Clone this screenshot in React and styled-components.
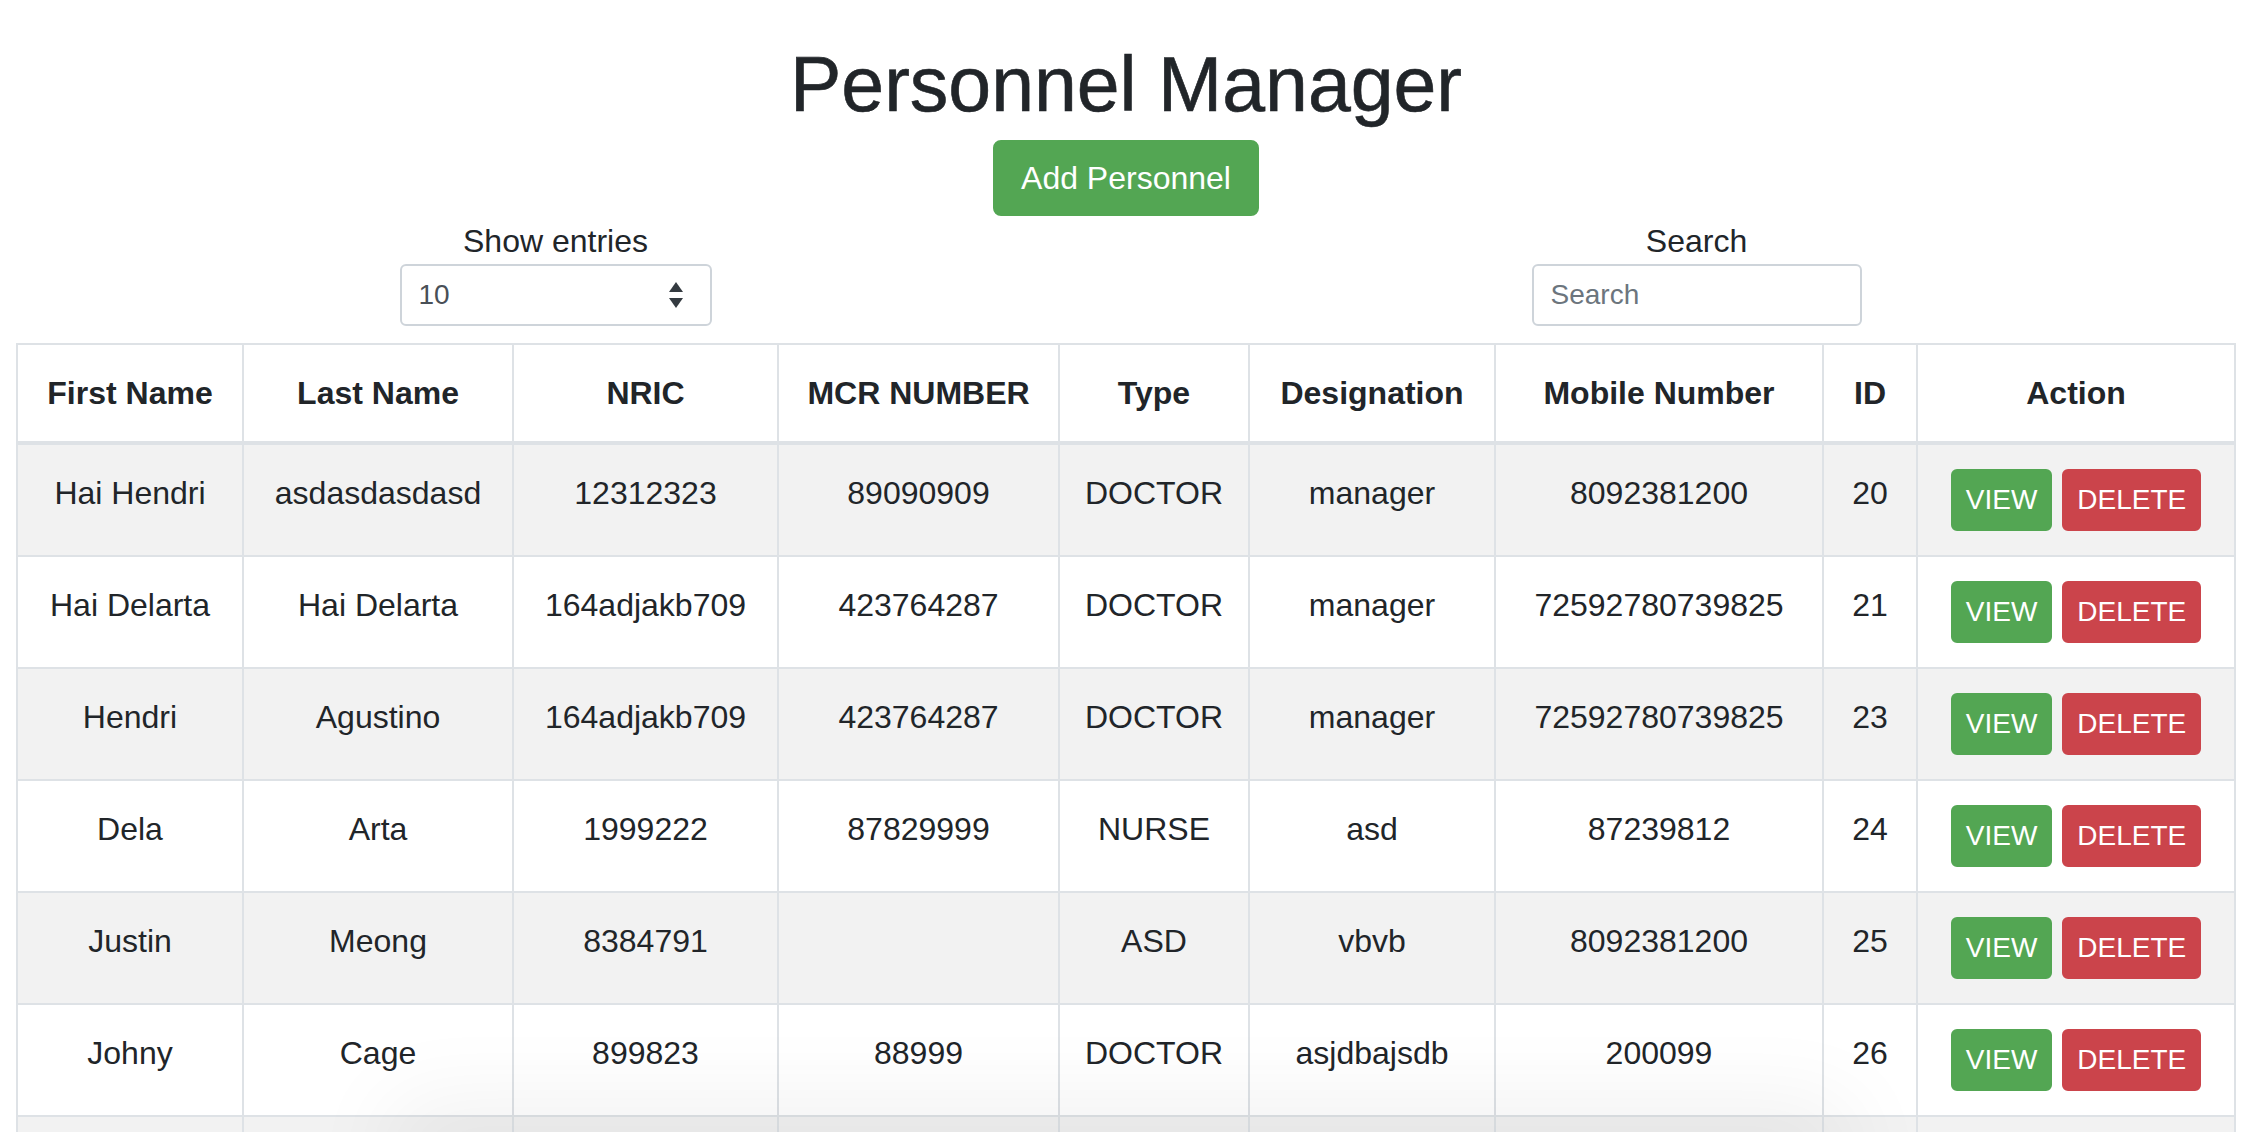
import React from "react";
import styled, { createGlobalStyle } from "styled-components";

const rows = [
  { first: "Hai Hendri", last: "asdasdasdasd", nric: "12312323", mcr: "89090909", type: "DOCTOR", designation: "manager", mobile: "8092381200", id: 20 },
  { first: "Hai Delarta", last: "Hai Delarta", nric: "164adjakb709", mcr: "423764287", type: "DOCTOR", designation: "manager", mobile: "72592780739825", id: 21 },
  { first: "Hendri", last: "Agustino", nric: "164adjakb709", mcr: "423764287", type: "DOCTOR", designation: "manager", mobile: "72592780739825", id: 23 },
  { first: "Dela", last: "Arta", nric: "1999222", mcr: "87829999", type: "NURSE", designation: "asd", mobile: "87239812", id: 24 },
  { first: "Justin", last: "Meong", nric: "8384791", mcr: "", type: "ASD", designation: "vbvb", mobile: "8092381200", id: 25 },
  { first: "Johny", last: "Cage", nric: "899823", mcr: "88999", type: "DOCTOR", designation: "asjdbajsdb", mobile: "200099", id: 26 },
];

const columns = [
  { label: "First Name", width: 226 },
  { label: "Last Name", width: 270 },
  { label: "NRIC", width: 265 },
  { label: "MCR NUMBER", width: 281 },
  { label: "Type", width: 190 },
  { label: "Designation", width: 246 },
  { label: "Mobile Number", width: 328 },
  { label: "ID", width: 94 },
  { label: "Action", width: 318 },
];

const App = () => {
  return (
    <>
      <GlobalStyle />
      <Page>
        <Title>Personnel Manager</Title>
        <AddButton>Add Personnel</AddButton>

        <Controls>
          <Field>
            <Label>Show entries</Label>
            <SelectBox>
              <span>10</span>
              <svg width="16" height="28" viewBox="0 0 16 28">
                <path d="M8 1 L15 11 L1 11 Z" fill="#343a40" />
                <path d="M8 27 L15 17 L1 17 Z" fill="#343a40" />
              </svg>
            </SelectBox>
          </Field>
          <Field>
            <Label>Search</Label>
            <SearchInput placeholder="Search" />
          </Field>
        </Controls>

        <Table>
          <colgroup>
            {columns.map((c) => (
              <col key={c.label} style={{ width: c.width }} />
            ))}
          </colgroup>
          <thead>
            <tr>
              {columns.map((c) => (
                <Th key={c.label}>{c.label}</Th>
              ))}
            </tr>
          </thead>
          <tbody>
            {rows.map((r, i) => (
              <Row key={r.id} $striped={i % 2 === 0}>
                <Td>{r.first}</Td>
                <Td>{r.last}</Td>
                <Td>{r.nric}</Td>
                <Td>{r.mcr}</Td>
                <Td>{r.type}</Td>
                <Td>{r.designation}</Td>
                <Td>{r.mobile}</Td>
                <Td>{r.id}</Td>
                <Td>
                  <SmallBtn $variant="success">VIEW</SmallBtn>
                  <SmallBtn $variant="danger">DELETE</SmallBtn>
                </Td>
              </Row>
            ))}
            {/* next row starts just at the fold */}
            <Row $striped>
              {columns.map((c) => (
                <EmptyTd key={c.label} />
              ))}
            </Row>
          </tbody>
        </Table>
      </Page>
      <BottomShade />
    </>
  );
};

export default App;

// ===== styles =====
const GlobalStyle = createGlobalStyle`
  html, body {
    margin: 0;
    padding: 0;
    overflow: hidden;
    background: #fff;
  }
  body {
    font-family: "Liberation Sans", Arial, sans-serif;
    color: #212529;
  }
`;

const Page = styled.div`
  width: 2252px;
  display: flex;
  flex-direction: column;
  align-items: center;
  text-align: center;
`;

const Title = styled.h1`
  margin: 0;
  padding-top: 38px;
  font-size: 77px;
  font-weight: 400;
  line-height: 92px;
  color: #212529;
  -webkit-text-stroke: 0.6px #212529;
`;

const AddButton = styled.button`
  margin-top: 10px;
  height: 76px;
  padding: 0 26px;
  font-family: inherit;
  font-size: 32px;
  color: #fff;
  background: #53a653;
  border: 2px solid #53a653;
  border-radius: 8px;
  cursor: pointer;
`;

const Controls = styled.div`
  display: grid;
  grid-template-columns: 330px 330px;
  column-gap: 811px;
  margin-top: 2px;
`;

const Field = styled.div`
  display: flex;
  flex-direction: column;
  align-items: center;
`;

const Label = styled.div`
  font-size: 32px;
  line-height: 46px;
`;

const SelectBox = styled.div`
  box-sizing: border-box;
  width: 312px;
  height: 62px;
  display: flex;
  align-items: center;
  justify-content: space-between;
  padding: 0 26px 0 17px;
  border: 2px solid #ced4da;
  border-radius: 6px;
  font-size: 28px;
  color: #495057;
  background: #fff;
`;

const SearchInput = styled.input`
  box-sizing: border-box;
  width: 330px;
  height: 62px;
  padding: 0 17px;
  border: 2px solid #ced4da;
  border-radius: 6px;
  font-family: inherit;
  font-size: 28px;
  color: #495057;
  outline: none;
  &::placeholder { color: #6c757d; }
`;

const Table = styled.table`
  margin-top: 17px;
  width: 2218px;
  table-layout: fixed;
  border-collapse: collapse;
  font-size: 32px;
  line-height: 48px;
`;

const Th = styled.th`
  padding: 24px;
  border: 2px solid #dee2e6;
  border-bottom-width: 4px;
  font-weight: 700;
  white-space: nowrap;
  vertical-align: bottom;
`;

const Row = styled.tr`
  background: ${(p) => (p.$striped ? "#f2f2f2" : "#fff")};
`;

const Td = styled.td`
  padding: 24px 0;
  border: 2px solid #dee2e6;
  vertical-align: top;
  white-space: nowrap;
`;

const EmptyTd = styled(Td)`
  height: 62px;
`;

const SmallBtn = styled.button`
  height: 62px;
  padding: 0 13px;
  margin: 0 5px;
  font-family: inherit;
  font-size: 28px;
  color: #fff;
  border-radius: 6px;
  vertical-align: top;
  background: ${(p) => (p.$variant === "danger" ? "#cb444b" : "#53a653")};
  border: 2px solid ${(p) => (p.$variant === "danger" ? "#cb444b" : "#53a653")};
  cursor: pointer;
`;

const BottomShade = styled.div`
  position: fixed;
  left: 420px;
  width: 1400px;
  bottom: -40px;
  height: 40px;
  box-shadow: 0 0 90px 30px rgba(0, 0, 0, 0.06);
  pointer-events: none;
`;
